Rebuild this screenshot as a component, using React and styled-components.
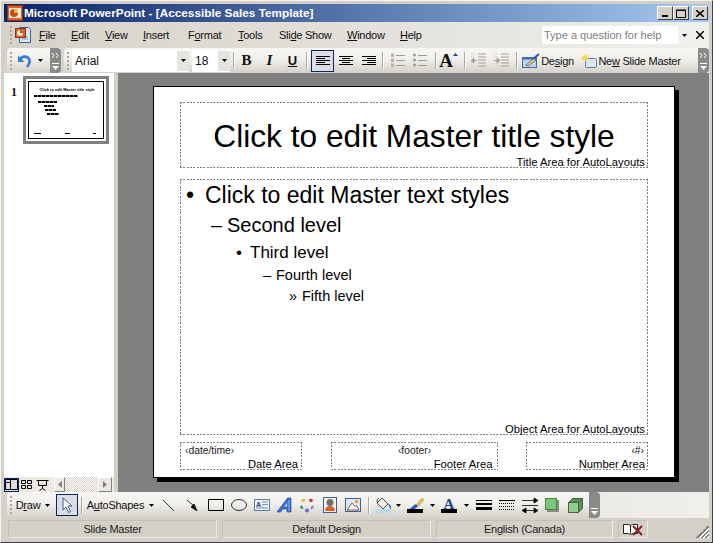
import React from 'react';
import styled, { createGlobalStyle } from 'styled-components';

const Global = createGlobalStyle`
  html, body { margin: 0; padding: 0; background: #d4d0c8; }
  * { box-sizing: border-box; }
`;

const UI_FONT = `"Liberation Sans", sans-serif`;

const Win = styled.div`
  width: 713px;
  height: 543px;
  padding: 4px 4px 2px;
  background: #d4d0c8;
  display: flex;
  flex-direction: column;
  font-family: ${UI_FONT};
  font-size: 11px;
  letter-spacing: -0.25px;
  color: #000;
  overflow: hidden;
  border-top: 1px solid #f4f3ef;
  border-left: 1px solid #f4f3ef;
  border-right: 1px solid #404040;
  border-bottom: 1px solid #404040;
`;

const TitleBar = styled.div`
  height: 18px;
  flex: none;
  margin: -1px -1px 0 -1px;
  padding: 0 1px 0 3px;
  display: flex;
  align-items: center;
  background: linear-gradient(90deg, #0a246a, #a6caf0);
  color: #fff;
`;

const TitleText = styled.div`
  flex: 1;
  margin-left: 1px;
  font-weight: 700;
  font-size: 11.8px;
  letter-spacing: 0;
`;

const CapBtn = styled.div`
  width: 16px;
  height: 14px;
  margin-left: ${p => (p.$gap ? 3 : 0)}px;
  background: #d4d0c8;
  border: 1px solid;
  border-color: #fff #404040 #404040 #fff;
  display: flex;
  align-items: center;
  justify-content: center;
`;

const MenuBar = styled.div`
  height: 26px;
  flex: none;
  margin: 0 -1px;
  padding-left: 3px;
  display: flex;
  align-items: center;
  background: linear-gradient(90deg, #d6d2ca, #f0efeb);
`;

const Grip = styled.div`
  width: 3px;
  height: 18px;
  flex: none;
  margin: ${p => p.$m || '0 2px 0 3px'};
  background-image: radial-gradient(circle at 1px 1px, #a8a499 1.1px, transparent 1.2px);
  background-size: 3px 4px;
`;

const MenuIconSlot = styled.div`
  width: 25px;
  flex: none;
`;

const MenuItem = styled.div`
  width: ${p => p.$w}px;
  flex: none;
  color: #111;
  u { text-decoration: underline; text-underline-offset: 1px; }
`;

const HelpBox = styled.div`
  margin-left: 102px;
  width: 148px;
  height: 18px;
  flex: none;
  background: #fff;
  display: flex;
  align-items: center;
  justify-content: space-between;
  padding-left: 2px;
  color: #808080;
  letter-spacing: 0;
`;

const HelpArrow = styled.div`
  width: 12px;
  height: 100%;
  background: #f1f0ec;
  display: flex;
  align-items: center;
  justify-content: center;
`;

const CloseDoc = styled.div`
  width: 20px;
  flex: none;
  display: flex;
  justify-content: center;
`;

const Dock = styled.div`
  height: ${p => p.$h || 25}px;
  flex: none;
  margin: 0 -1px;
  padding-left: 3px;
  display: flex;
  align-items: stretch;
  background: linear-gradient(90deg, #d6d2ca, #f0efeb);
`;

const Band = styled.div`
  display: flex;
  align-items: center;
  flex: ${p => (p.$grow ? 1 : 'none')};
  margin-right: ${p => p.$mr || 0}px;
  padding-right: ${p => p.$pr || 0}px;
  border-radius: 4px 0 0 4px;
  background: linear-gradient(180deg, #f7f6f3 0%, #f0efea 45%, #d4d1c8 100%);
`;

const Chevron = styled.div`
  width: 11px;
  height: 100%;
  flex: none;
  border-radius: 0 4px 4px 0;
  background: #8a8a8a;
  display: flex;
  flex-direction: column;
  align-items: center;
  justify-content: space-between;
  padding: 5px 0 3px;
`;

const Tool = styled.div`
  width: ${p => p.$w || 23}px;
  height: 22px;
  flex: none;
  margin-left: ${p => p.$ml || 0}px;
  display: flex;
  align-items: center;
  justify-content: center;
  gap: ${p => p.$gap || 0}px;
  white-space: nowrap;
  color: #111;
  border: 1px solid ${p => (p.$active ? '#0a246a' : 'transparent')};
  background: ${p => (p.$active ? '#dcdde2' : 'transparent')};
  u { text-decoration: underline; text-underline-offset: 1px; }
`;

const Sep = styled.div`
  width: 1px;
  height: 17px;
  flex: none;
  margin: 0 ${p => p.$r}px 0 ${p => p.$l}px;
  background: #aca899;
  box-shadow: 1px 0 0 #fff;
`;

const Combo = styled.div`
  width: ${p => p.$w}px;
  height: 22px;
  flex: none;
  margin-right: ${p => p.$mr || 0}px;
  background: #fff;
  display: flex;
  align-items: center;
  justify-content: space-between;
  padding-left: 3px;
  font-size: 12px;
  letter-spacing: 0;
  color: #111;
`;

const ComboArrow = styled.div`
  width: 12px;
  height: 20px;
  background: #e6e4de;
  display: flex;
  align-items: center;
  justify-content: center;
`;

const Glyph = styled.span`
  font-family: ${p => (p.$sans ? '"Liberation Sans"' : '"Liberation Serif"')}, serif;
  font-size: ${p => p.$size || (p.$sans ? 13 : 15)}px;
  line-height: 1;
  letter-spacing: 0;
  font-weight: 700;
  font-style: ${p => (p.$italic ? 'italic' : 'normal')};
  text-decoration: ${p => (p.$under ? 'underline' : 'none')};
`;

const Caret = styled.svg`
  align-self: flex-start;
  margin-top: 2px;
`;

const Body = styled.div`
  flex: 1;
  min-height: 0;
  display: flex;
  margin: 0 -1px;
`;

const SidePane = styled.div`
  width: 110px;
  flex: none;
  background: #fff;
  display: flex;
  flex-direction: column;
`;

const ThumbRow = styled.div`
  flex: 1;
  display: flex;
  align-items: flex-start;
  padding: 3px 0 0 7px;
`;

const ThumbNum = styled.div`
  width: 12px;
  padding-top: 9px;
  font-family: "Liberation Serif", serif;
  font-weight: 700;
  font-size: 12px;
  letter-spacing: 0;
  color: #111;
`;

const ThumbFrame = styled.div`
  width: 86px;
  height: 68px;
  border: 3px solid #808080;
  background: #fff;
  padding: 2px;
`;

const ThumbSlide = styled.div`
  height: 100%;
  border: 1px solid #000;
  background: #fff;
  display: flex;
  flex-direction: column;
  padding: 4px 3px 4px 5px;
  color: #000;
`;

const ThumbTitle = styled.div`
  font-size: 4px;
  line-height: 7px;
  font-weight: 700;
  text-align: center;
  white-space: nowrap;
  letter-spacing: 0;
`;

const ThumbLine = styled.div`
  height: 2px;
  width: ${p => p.$w}px;
  margin: ${p => p.$t}px 0 0 ${p => p.$l}px;
  background-image: repeating-linear-gradient(90deg, #000 0 3px, #777 3px 4px);
`;

const ThumbFoot = styled.div`
  margin-top: auto;
  display: flex;
  justify-content: space-between;
  padding: 0 4px 0 0;
`;

const ThumbFootBar = styled.div`
  width: ${p => p.$w}px;
  height: 1px;
  background: #000;
`;

const ViewBar = styled.div`
  height: 15px;
  flex: none;
  display: flex;
  align-items: center;
  background: #ece9e2;
`;

const ViewBtn = styled.div`
  width: ${p => p.$w || 15}px;
  height: 14px;
  flex: none;
  margin-right: ${p => p.$mr || 0}px;
  display: flex;
  align-items: center;
  justify-content: center;
  border: 1px solid ${p => (p.$active ? '#0a246a' : 'transparent')};
  background: ${p => (p.$active ? '#dcdde2' : 'transparent')};
`;

const ScrollBtn = styled.div`
  width: ${p => p.$w || 13}px;
  height: 15px;
  flex: none;
  background: #ece9e2;
  border: 1px solid;
  border-color: #fff #808080 #808080 #fff;
  display: flex;
  align-items: center;
  justify-content: center;
`;

const ScrollTrack = styled.div`
  flex: 1;
  height: 15px;
  background-color: #fff;
  background-image: conic-gradient(#d4d0c8 25%, #fff 0 50%, #d4d0c8 0 75%, #fff 0);
  background-size: 2px 2px;
`;

const Splitter = styled.div`
  width: 4px;
  flex: none;
  background: #d4d0c8;
`;

const Canvas = styled.div`
  flex: 1;
  background: #808080;
  padding: 13px 0 0 35px;
`;

const Slide = styled.div`
  width: 522px;
  height: 392px;
  background: #fff;
  border: 1px solid #000;
  box-shadow: 4px 4px 0 #000;
  padding: 15px 26px 7px;
  display: flex;
  flex-direction: column;
  letter-spacing: 0;
  color: #000;
`;

const dash = angle => `repeating-linear-gradient(${angle}, #808080 0 2px, transparent 2px 3.33px)`;

const Placeholder = styled.div`
  position: relative;
  width: ${p => (p.$w ? `${p.$w}px` : 'auto')};
  height: ${p => (p.$h ? `${p.$h}px` : 'auto')};
  flex: ${p => (p.$grow ? 1 : 'none')};
  margin-top: ${p => p.$mt || 0}px;
  background-image: ${dash('90deg')}, ${dash('90deg')}, ${dash('180deg')}, ${dash('180deg')};
  background-size: 100% 1px, 100% 1px, 1px 100%, 1px 100%;
  background-position: 0 0, 0 100%, 0 0, 100% 0;
  background-repeat: no-repeat;
`;

const AreaLabel = styled.div`
  position: absolute;
  right: ${p => p.$r || 3}px;
  bottom: -1px;
  font-size: 11.25px;
  line-height: 13px;
  white-space: nowrap;
`;

const MasterTitle = styled.div`
  text-align: center;
  font-size: 31.700px;
  line-height: 37px;
  padding-top: 16px;
  white-space: nowrap;
`;

const Level = styled.div`
  display: flex;
  white-space: nowrap;
  padding-left: ${p => p.$l}px;
  font-size: ${p => p.$s}px;
  line-height: ${p => p.$lh}px;
  margin-bottom: ${p => p.$mb}px;
`;

const Bullet = styled.span`
  width: ${p => p.$b}px;
  flex: none;
`;

const BodyText = styled.div`
  padding-top: 2px;
`;

const FootRow = styled.div`
  display: flex;
  justify-content: space-between;
  margin-top: 7px;
`;

const FootField = styled.div`
  padding: 3px 4px 0 5px;
  font-size: 10.300px;
  line-height: 11px;
  color: #222;
  text-align: ${p => p.$align || 'left'};
`;

const Status = styled.div`
  height: 22px;
  flex: none;
  margin: 0 -1px;
  padding: 2px 0 2px 4px;
  display: flex;
  gap: 5px;
  background: #d4d0c8;
`;

const StatusCell = styled.div`
  width: ${p => p.$w}px;
  flex: none;
  display: flex;
  align-items: center;
  justify-content: center;
  color: #222;
  border: 1px solid;
  border-color: #c4c0b7 #ecebe6 #ecebe6 #c4c0b7;
`;

const ResizeGrip = styled.div`
  margin-left: auto;
  align-self: flex-end;
  width: 13px;
  height: 13px;
  background: linear-gradient(135deg, transparent 50%, #808080 50% 58%, #fff 58% 66%, #808080 66% 74%, #fff 74% 82%, #808080 82% 90%, #fff 90%);
`;

const DropArrow = styled.div`
  width: 11px;
  height: 22px;
  flex: none;
  display: flex;
  align-items: center;
  justify-content: center;
`;

const Down = () => (
  <svg width="5" height="3" viewBox="0 0 5 3"><path d="M0 0h5L2.500 3z" fill="#000" /></svg>
);

const ChevronIcons = ({ top = true }) => (
  <>
    {top ? (
      <svg width="7" height="5" viewBox="0 0 7 5"><path d="M0 0l2 2.500-2 2.500M4 0l2 2.500-2 2.500" stroke="#fff" fill="none" /></svg>
    ) : <span />}
    <svg width="7" height="7" viewBox="0 0 7 7"><path d="M0 0h7v1H0zM0 3h7L3.500 7z" fill="#fff" /></svg>
  </>
);

const Ico = ({ w = 16, h = 16, children }) => (
  <svg width={w} height={h} viewBox={`0 0 ${w} ${h}`} style={{ display: 'block' }}>{children}</svg>
);

const AppIcon = () => (
  <Ico>
    <rect x=".5" y=".5" width="15" height="15" fill="#d8622a" stroke="#8a3410" />
    <rect x="2" y="3" width="12" height="10" fill="#f5e6d8" />
    <circle cx="7" cy="8" r="4" fill="#c84c18" />
    <path d="M7 8V4a4 4 0 0 1 4 4z" fill="#f0c040" />
  </Ico>
);

const DocIcon = () => (
  <Ico w={18} h={18}>
    <path d="M5.500 1.500h9l2 2v13h-11z" fill="#dbe6f5" stroke="#39619c" />
    <path d="M8 11h6M8 13h6" stroke="#7d9cc8" />
    <rect x="1.500" y="2.500" width="10" height="9" fill="#d8622a" stroke="#8a3410" />
    <circle cx="6" cy="7" r="3" fill="#f5e6d8" />
    <path d="M6 7V4a3 3 0 0 1 3 3z" fill="#c84c18" />
  </Ico>
);

const UndoIcon = () => (
  <Ico>
    <path d="M3 7a5 5 0 0 1 9-1c1 2 .5 5-2 8" fill="none" stroke="#3a79d8" strokeWidth="2.600" />
    <path d="M1 2.500v6.500h6.500z" fill="#3a79d8" />
  </Ico>
);

const Lines = ({ rows }) => (
  <Ico w={14} h={12}>
    {rows.map((r, i) => <rect key={i} x={r[0]} y={i * 2 + 1} width={r[1]} height="1" fill="#000" />)}
  </Ico>
);

const ListIcon = ({ numbered }) => (
  <Ico w={15} h={15}>
    {[2, 7, 12].map(y => (
      numbered
        ? <rect key={y} x="1" y={y - 1.500} width="3" height="3.500" fill="#b9b5aa" />
        : <circle key={y} cx="2.500" cy={y} r="1.500" fill="#9f9b90" />
    ))}
    {[2, 7, 12].map(y => <rect key={y} x="6" y={y} width="9" height="1" fill="#9f9b90" />)}
  </Ico>
);

const IndentIcon = ({ flip }) => (
  <Ico w={17} h={15}>
    <path d="M8 1h8M8 4h8M8 7h8M8 10h8M8 13h8" stroke="#a5a196" />
    <path d="M1 1h4M1 4h4M1 10h4M1 13h4" stroke="#c7c3b8" strokeDasharray="1 1" />
    <path d={flip ? 'M1 7.500h3V5l3 2.500L4 10V7.500' : 'M7 7.500H4V5L1 7.500 4 10V7.500'} stroke="#a5a196" fill="#a5a196" />
  </Ico>
);

const DesignIcon = () => (
  <Ico w={18} h={16}>
    <rect x=".5" y="4.500" width="14" height="10" fill="#bcd2ee" stroke="#3f6ea8" />
    <rect x=".5" y="4.500" width="14" height="2" fill="#3f6ea8" />
    <path d="M4 12l8-7 2 2-8 6z" fill="#f4d058" stroke="#2a4c80" strokeWidth=".7" />
    <path d="M11 6l6-5" stroke="#2c58a8" strokeWidth="2" />
  </Ico>
);

const NewMasterIcon = () => (
  <Ico w={16} h={16}>
    <rect x="4.500" y="5.500" width="11" height="9" rx="1" fill="#dbe4f1" stroke="#5f7fa8" />
    <path d="M4 1l1 2 2-1-1 2 2 1-2 1 1 2-2-1-1 2-1-2-2 1 1-2-2-1 2-1-1-2 2 1z" fill="#f6d855" />
  </Ico>
);

const Cursor = () => (
  <Ico w={12} h={17}>
    <path d="M2 1v12l3-3 2.500 5.500 2-1L7 9h4z" fill="#fff" stroke="#2b5ea8" strokeLinejoin="round" />
  </Ico>
);

const TextBoxIcon = () => (
  <Ico>
    <rect x=".5" y="2.500" width="15" height="11" fill="#eaf0f9" stroke="#5a7cad" />
    <text x="2" y="9.500" fontFamily="Liberation Sans" fontWeight="700" fontSize="7" fill="#24408c">A</text>
    <path d="M8 5h6M8 7.500h6M2 11h12" stroke="#7b93b8" />
  </Ico>
);

const WordArt = () => (
  <Ico w={17} h={17}>
    <path d="M1 15L11.500 1H15v14h-4v-3H7l-2.500 3z" fill="#3a6fd0" stroke="#1c3f8c" strokeWidth=".6" />
    <path d="M8.500 9.500L11 6v3.500z" fill="#dbe8fa" />
    <path d="M13 3v11" stroke="#8fb4ee" />
  </Ico>
);

const DiagramIcon = () => (
  <Ico>
    <path d="M6 2.500A6 6 0 0 0 3 5M10 2.500A6 6 0 0 1 13 5M2.500 9a6 6 0 0 0 1.500 3M13.500 9a6 6 0 0 1-1.500 3M7 14.500h2" stroke="#555" fill="none" />
    <circle cx="4" cy="3.500" r="1.800" fill="#e8c440" />
    <circle cx="12" cy="3.500" r="1.800" fill="#c83c30" />
    <circle cx="2.500" cy="10" r="1.500" fill="#3c8c9c" />
    <circle cx="8" cy="13.500" r="2" fill="#6a6ad8" />
    <circle cx="13.500" cy="10" r="1.500" fill="#8c8cd8" />
  </Ico>
);

const ClipIcon = () => (
  <Ico w={14} h={16}>
    <rect x=".5" y=".5" width="13" height="15" fill="#f4f4f0" stroke="#3f5f90" />
    <circle cx="7" cy="5.500" r="3.500" fill="#707070" />
    <path d="M2 14c0-4 3-5 5-5s5 1 5 5z" fill="#d8622a" />
  </Ico>
);

const PictureIcon = () => (
  <Ico>
    <rect x=".5" y="1.500" width="15" height="13" fill="#dbe8f6" stroke="#3f5f90" />
    <circle cx="11.500" cy="4.500" r="1.800" fill="#f0a030" />
    <path d="M2 13l5-7 3 3.500 1.500-1 2.500 4.500z" fill="#f5f5f5" stroke="#7a5a48" />
  </Ico>
);

const FillIcon = () => (
  <Ico w={17} h={16}>
    <rect x="0" y="12" width="15" height="4" fill="#b4dcec" />
    <path d="M7 1l6 6-5 5-6-6z" fill="#f2f2f2" stroke="#333" strokeWidth=".9" />
    <path d="M3 6c-2-2-1-4 1-4.500" fill="none" stroke="#333" />
    <path d="M13.500 6.500c2 1 3 3 2.500 5.500-1.500-1-2.500-3-2.500-5.500z" fill="#2c68c8" />
  </Ico>
);

const PenIcon = () => (
  <Ico w={17} h={16}>
    <path d="M10 7l5-6 2 2-5 6z" fill="#e8c050" stroke="#b08820" strokeWidth=".5" />
    <path d="M2 12c3-1 4-4 7-5l2 2c-2 3-5 4-9 3z" fill="#2c58c8" />
    <rect x="0" y="12" width="16" height="4" fill="#000" />
  </Ico>
);

const FontColor = () => (
  <Ico w={17} h={16}>
    <text x="2.500" y="11.500" fontFamily="Liberation Serif" fontWeight="700" fontSize="15" fill="#24408c">A</text>
    <rect x="0" y="12" width="16" height="4" fill="#000" />
  </Ico>
);

const LineStyle = () => (
  <Ico w={16} h={12}>
    <rect y="1" width="16" height="1" /><rect y="4" width="16" height="2" /><rect y="8" width="16" height="3" />
  </Ico>
);

const DashStyle = () => (
  <Ico w={16} h={12}>
    <path d="M0 1.500h16" stroke="#000" />
    <path d="M0 4.500h16M0 7.500h16M0 10.500h16" stroke="#000" strokeDasharray="1 1" />
  </Ico>
);

const ArrowStyle = () => (
  <Ico w={16} h={15}>
    <path d="M0 2.500h12M12 0l4 2.500L12 5zM0 7.500h16" stroke="#000" fill="#000" strokeWidth=".8" />
    <path d="M4 10l-4 2.500L4 15zM12 10l4 2.500L12 15zM3 12.500h10" stroke="#000" fill="#000" strokeWidth=".8" />
  </Ico>
);

const ShadowIcon = () => (
  <Ico w={15} h={15}>
    <rect x="2" y="2" width="12" height="12" fill="#8a8a84" />
    <rect x=".5" y=".5" width="11" height="11" fill="#7cc47c" stroke="#3e8c3e" />
  </Ico>
);

const Cube3D = () => (
  <Ico w={15} h={15}>
    <path d="M.5 4.500l4-4h10v10l-4 4z" fill="#4c9a4c" stroke="#555" />
    <rect x=".5" y="4.500" width="10" height="10" fill="#8fd08f" stroke="#555" />
    <path d="M10.500 4.500l4-4" stroke="#555" />
  </Ico>
);

const SpellIcon = () => (
  <Ico w={20} h={13}>
    <path d="M.5 1.500h5l2 1 2-1h5v9h-5l-2 1-2-1h-5z" fill="#fff" stroke="#222" />
    <path d="M7.500 2.500v8" stroke="#222" />
    <path d="M10 3l9 9M19 3l-9 9" stroke="#8a1c1c" strokeWidth="2" />
  </Ico>
);

const menus = [
  [32, <><u>F</u>ile</>], [34, <><u>E</u>dit</>], [38, <><u>V</u>iew</>], [45, <><u>I</u>nsert</>],
  [50, <>F<u>o</u>rmat</>], [41, <><u>T</u>ools</>], [68, <>Sli<u>d</u>e Show</>], [53, <><u>W</u>indow</>],
];

export default function App() {
  return (
    <Win>
      <Global />
      <TitleBar>
        <AppIcon />
        <TitleText>Microsoft PowerPoint - [Accessible Sales Template]</TitleText>
        <CapBtn><svg width="8" height="8"><rect x="1" y="6" width="6" height="2" /></svg></CapBtn>
        <CapBtn><svg width="10" height="9"><path d="M.5 1.500h9v7h-9zM0 1h10" fill="none" stroke="#000" /></svg></CapBtn>
        <CapBtn $gap><svg width="8" height="7"><path d="M0 0l8 7M8 0L0 7" stroke="#000" strokeWidth="1.500" /></svg></CapBtn>
      </TitleBar>

      <MenuBar>
        <Grip $m="0 1px 0 3px" />
        <MenuIconSlot><DocIcon /></MenuIconSlot>
        {menus.map(([w, label], i) => <MenuItem key={i} $w={w}>{label}</MenuItem>)}
        <MenuItem $w={40}><u>H</u>elp</MenuItem>
        <HelpBox>Type a question for help<HelpArrow><Down /></HelpArrow></HelpBox>
        <CloseDoc>
          <svg width="8" height="8"><path d="M0 0l8 8M8 0L0 8" stroke="#000" strokeWidth="1.500" /></svg>
        </CloseDoc>
      </MenuBar>

      <Dock>
        <Band $mr={3}>
          <Grip />
          <Tool $w={20}><UndoIcon /></Tool>
          <DropArrow><Down /></DropArrow>
          <Tool $w={4} />
          <Chevron><ChevronIcons /></Chevron>
        </Band>
        <Band $grow>
          <Grip />
          <Combo $w={117} $mr={3}>Arial<ComboArrow><Down /></ComboArrow></Combo>
          <Combo $w={38}>18<ComboArrow><Down /></ComboArrow></Combo>
          <Sep $l={3} $r={1} />
          <Tool><Glyph>B</Glyph></Tool>
          <Tool><Glyph $italic>I</Glyph></Tool>
          <Tool><Glyph $sans $under>U</Glyph></Tool>
          <Sep $l={2} $r={4} />
          <Tool $active><Lines rows={[[0, 14], [0, 9], [0, 14], [0, 9], [0, 14]]} /></Tool>
          <Tool><Lines rows={[[0, 14], [3, 8], [0, 14], [3, 8], [0, 14]]} /></Tool>
          <Tool><Lines rows={[[0, 14], [5, 9], [0, 14], [5, 9], [0, 14]]} /></Tool>
          <Sep $l={2} $r={3} />
          <Tool><ListIcon numbered /></Tool>
          <Tool $w={21}><ListIcon /></Tool>
          <Sep $l={5} $r={1} />
          <Tool>
            <Glyph $size={19}>A</Glyph>
            <Caret width="5" height="3" viewBox="0 0 5 3"><path d="M0 3l2.500-3L5 3z" fill="#24408c" /></Caret>
          </Tool>
          <Sep $l={4} $r={2} />
          <Tool><IndentIcon /></Tool>
          <Tool><IndentIcon flip /></Tool>
          <Sep $l={3} $r={4} />
          <Tool $w={54} $gap={1}><DesignIcon /><span>De<u>s</u>ign</span></Tool>
          <Tool $w={104} $gap={1} $ml={4}><NewMasterIcon /><span>Ne<u>w</u> Slide Master</span></Tool>
        </Band>
        <Chevron><ChevronIcons /></Chevron>
      </Dock>

      <Body>
        <SidePane>
          <ThumbRow>
            <ThumbNum>1</ThumbNum>
            <ThumbFrame>
              <ThumbSlide>
                <ThumbTitle>Click to edit Master title style</ThumbTitle>
                <ThumbLine $t={2} $l={0} $w={44} />
                <ThumbLine $t={4} $l={4} $w={19} />
                <ThumbLine $t={2} $l={10} $w={10} />
                <ThumbLine $t={2} $l={11} $w={11} />
                <ThumbLine $t={2} $l={13} $w={12} />
                <ThumbFoot>
                  <ThumbFootBar $w={7} /><ThumbFootBar $w={5} /><ThumbFootBar $w={3} />
                </ThumbFoot>
              </ThumbSlide>
            </ThumbFrame>
          </ThumbRow>
          <ViewBar>
            <ViewBtn $active>
              <svg width="13" height="11"><path d="M.5.500h12v10H.5zM5.500.500v10M.5 3.500h5" fill="none" stroke="#000" /></svg>
            </ViewBtn>
            <ViewBtn>
              <svg width="13" height="11"><path d="M1.500 1.500h4v3h-4zM7.500 1.500h4v3h-4zM1.500 6.500h4v3h-4zM7.500 6.500h4v3h-4z" fill="none" stroke="#000" /></svg>
            </ViewBtn>
            <ViewBtn $w={16} $mr={4}>
              <svg width="13" height="12"><path d="M.5 1.500h12M2.500 1.500v5h8v-5M6.500 6.500v3M3.500 11.500l3-2 3 2" fill="none" stroke="#000" /></svg>
            </ViewBtn>
            <ScrollBtn $w={11}><svg width="4" height="7"><path d="M4 0v7L0 3.500z" fill="#808080" /></svg></ScrollBtn>
            <ScrollTrack />
            <ScrollBtn $w={14}><svg width="4" height="7"><path d="M0 0v7l4-3.500z" fill="#808080" /></svg></ScrollBtn>
            <Tool $w={1} />
          </ViewBar>
        </SidePane>
        <Splitter />
        <Canvas>
          <Slide>
            <Placeholder $h={66}>
              <MasterTitle>Click to edit Master title style</MasterTitle>
              <AreaLabel>Title Area for AutoLayouts</AreaLabel>
            </Placeholder>
            <Placeholder $grow $mt={11}>
              <BodyText>
                <Level $l={6} $s={23} $lh={28} $mb={4}><Bullet $b={19}>•</Bullet><span>Click to edit Master text styles</span></Level>
                <Level $l={31} $s={20} $lh={24} $mb={6}><Bullet $b={16}>–</Bullet><span>Second level</span></Level>
                <Level $l={56} $s={17} $lh={20} $mb={4}><Bullet $b={14}>•</Bullet><span>Third level</span></Level>
                <Level $l={83} $s={14.500} $lh={17} $mb={4}><Bullet $b={13}>–</Bullet><span>Fourth level</span></Level>
                <Level $l={109} $s={14.500} $lh={17} $mb={0}><Bullet $b={13}>»</Bullet><span>Fifth level</span></Level>
              </BodyText>
              <AreaLabel>Object Area for AutoLayouts</AreaLabel>
            </Placeholder>
            <FootRow>
              <Placeholder $w={122} $h={28}>
                <FootField>‹date/time›</FootField>
                <AreaLabel $r={4}>Date Area</AreaLabel>
              </Placeholder>
              <Placeholder $w={167} $h={28}>
                <FootField $align="center">‹footer›</FootField>
                <AreaLabel $r={5}>Footer Area</AreaLabel>
              </Placeholder>
              <Placeholder $w={122} $h={28}>
                <FootField $align="right">‹#›</FootField>
                <AreaLabel>Number Area</AreaLabel>
              </Placeholder>
            </FootRow>
          </Slide>
        </Canvas>
      </Body>

      <Dock $h={26}>
        <Band $pr={2}>
          <Grip $m="0 1px 0 3px" />
          <Tool $w={28}><span>D<u>r</u>aw</span></Tool>
          <DropArrow><Down /></DropArrow>
          <Tool $w={22} $ml={3} $active><Cursor /></Tool>
          <Sep $l={3} $r={3} />
          <Tool $w={61}><span>A<u>u</u>toShapes</span></Tool>
          <DropArrow><Down /></DropArrow>
          <Tool><svg width="13" height="11"><path d="M1 0l11 11" stroke="#333" /></svg></Tool>
          <Tool $w={24}><svg width="13" height="11"><path d="M1 0l8 7M5 7l6 4-3-7z" stroke="#222" fill="#000" /></svg></Tool>
          <Tool><svg width="16" height="12"><rect x=".5" y=".5" width="15" height="11" fill="none" stroke="#000" /></svg></Tool>
          <Tool><svg width="16" height="12"><ellipse cx="8" cy="6" rx="7.500" ry="5.500" fill="none" stroke="#333" /></svg></Tool>
          <Tool><TextBoxIcon /></Tool>
          <Tool><WordArt /></Tool>
          <Tool $w={22}><DiagramIcon /></Tool>
          <Tool><ClipIcon /></Tool>
          <Tool><PictureIcon /></Tool>
          <Sep $l={4} $r={4} />
          <Tool $w={20}><FillIcon /></Tool>
          <DropArrow><Down /></DropArrow>
          <Tool><PenIcon /></Tool>
          <DropArrow><Down /></DropArrow>
          <Tool><FontColor /></Tool>
          <DropArrow><Down /></DropArrow>
          <Tool><LineStyle /></Tool>
          <Tool><DashStyle /></Tool>
          <Tool><ArrowStyle /></Tool>
          <Tool><ShadowIcon /></Tool>
          <Tool><Cube3D /></Tool>
        </Band>
        <Chevron><ChevronIcons top={false} /></Chevron>
      </Dock>

      <Status>
        <StatusCell $w={209}>Slide Master</StatusCell>
        <StatusCell $w={209}>Default Design</StatusCell>
        <StatusCell $w={177}>English (Canada)</StatusCell>
        <StatusCell $w={30}><SpellIcon /></StatusCell>
        <ResizeGrip />
      </Status>
    </Win>
  );
}
